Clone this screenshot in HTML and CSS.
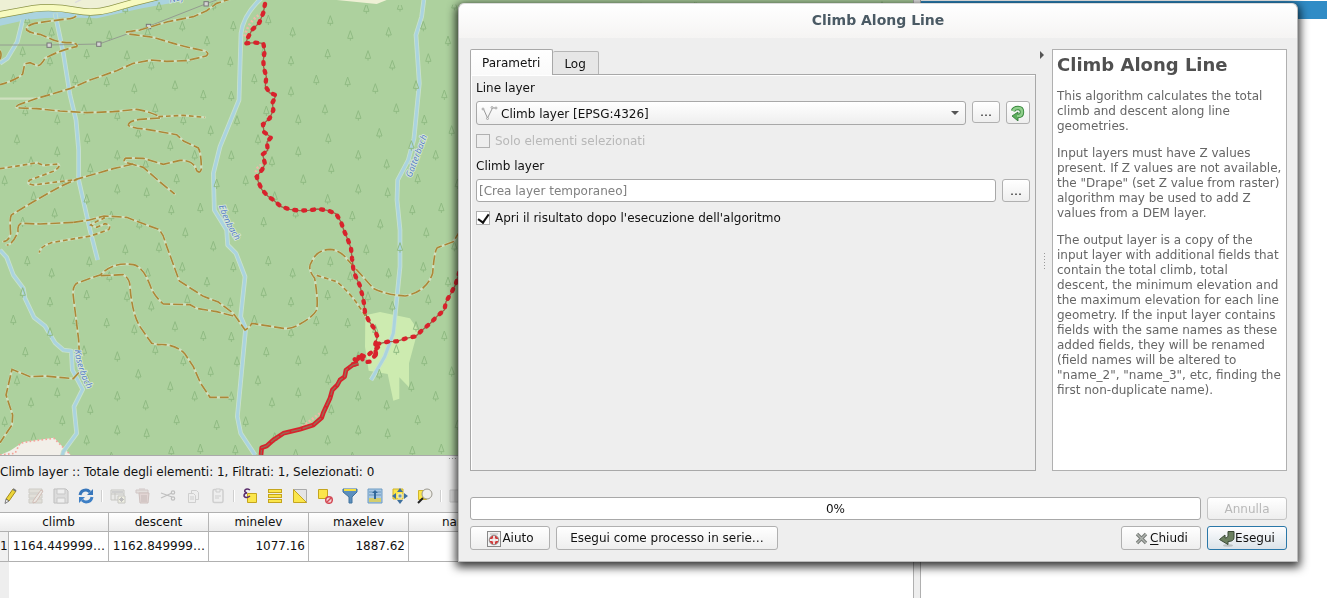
FILE: index.html
```html
<!DOCTYPE html>
<html lang="it">
<head>
<meta charset="utf-8">
<title>Climb Along Line</title>
<link rel="stylesheet" href="styles.css">
</head>
<body>
<main class="desktop">
<section class="left-pane">
<svg class="map" viewBox="0 0 2739 1365" preserveAspectRatio="xMinYMin slice" aria-label="Mappa">
<defs>
<path id="tree" d="M0-17L-8 6H8ZM0 6V13"/>
<pattern id="wood" width="723" height="723" patternUnits="userSpaceOnUse">
<g class="trees">
<use href="#tree" x="82" y="62"/><use href="#tree" x="68" y="157"/><use href="#tree" x="155" y="99"/><use href="#tree" x="268" y="64"/><use href="#tree" x="328" y="109"/><use href="#tree" x="260" y="164"/><use href="#tree" x="150" y="185"/><use href="#tree" x="40" y="239"/><use href="#tree" x="226" y="242"/><use href="#tree" x="320" y="248"/><use href="#tree" x="381" y="169"/><use href="#tree" x="454" y="198"/><use href="#tree" x="403" y="268"/><use href="#tree" x="525" y="259"/><use href="#tree" x="547" y="81"/><use href="#tree" x="477" y="22"/><use href="#tree" x="376" y="28"/><use href="#tree" x="443" y="99"/><use href="#tree" x="562" y="178"/><use href="#tree" x="621" y="125"/><use href="#tree" x="691" y="187"/><use href="#tree" x="700" y="80"/><use href="#tree" x="640" y="18"/><use href="#tree" x="610" y="287"/><use href="#tree" x="694" y="290"/><use href="#tree" x="150" y="277"/><use href="#tree" x="76" y="335"/><use href="#tree" x="252" y="331"/><use href="#tree" x="172" y="361"/><use href="#tree" x="352" y="349"/><use href="#tree" x="466" y="328"/><use href="#tree" x="550" y="362"/><use href="#tree" x="632" y="394"/><use href="#tree" x="711" y="364"/><use href="#tree" x="51" y="421"/><use href="#tree" x="262" y="418"/><use href="#tree" x="172" y="457"/><use href="#tree" x="415" y="402"/><use href="#tree" x="511" y="439"/><use href="#tree" x="584" y="468"/><use href="#tree" x="694" y="469"/><use href="#tree" x="93" y="487"/><use href="#tree" x="352" y="468"/><use href="#tree" x="271" y="508"/><use href="#tree" x="437" y="495"/><use href="#tree" x="530" y="539"/><use href="#tree" x="14" y="544"/><use href="#tree" x="187" y="541"/><use href="#tree" x="101" y="592"/><use href="#tree" x="352" y="570"/><use href="#tree" x="440" y="580"/><use href="#tree" x="650" y="554"/><use href="#tree" x="601" y="626"/><use href="#tree" x="514" y="632"/><use href="#tree" x="706" y="629"/><use href="#tree" x="260" y="600"/><use href="#tree" x="164" y="642"/><use href="#tree" x="334" y="650"/><use href="#tree" x="418" y="675"/><use href="#tree" x="68" y="668"/><use href="#tree" x="556" y="700"/>
</g>
</pattern>
<path id="p-eb" d="M656 618Q680 690 718 735"/>
<path id="p-ka" d="M224 1050Q232 1120 270 1180"/>
<path id="p-ga" d="M1234 534L1286 398"/>
<g id="tracks">
<path d="M228 48Q222 56 200 57L150 63L104 70Q76 78 80 90Q92 100 120 103L160 120Q180 128 215 128Q236 132 230 140Q180 150 135 175Q122 198 112 197L90 188L74 192L68 222Q50 240 0 254"/>
<path d="M0 152Q6 165 0 178"/>
<path d="M700-6L650 10L620 32L580 50L500 66L420 90L380 96Q378 102 400 104L460 112L520 130Q560 142 615 153Q630 160 618 168L560 182L500 184L455 180L400 190L350 212L270 240L210 266L105 297L56 314Q40 324 60 324L110 326L180 333L260 338L340 335L410 328Q440 332 475 348"/>
<path d="M480 354L420 358Q384 364 385 376Q396 384 440 388L530 404L552 424L595 444Q604 460 604 508Q600 522 590 512Q582 480 540 481L490 493L430 475L378 474Q364 484 384 489L430 502L480 546L524 582"/>
<path d="M400 492L340 506L232 537L180 560L100 605L34 645Q28 656 32 700Q28 722 10 725M220 667L120 672L64 670Q52 674 54 695Q38 735 20 735"/>
<path d="M220 667L268 660L312 648L380 652L440 675L475 688Q490 700 495 725L538 843L610 889L655 906L700 940L735 990Q752 980 755 970L850 985Q875 988 900 972Q940 950 950 930Q955 900 944 835Q920 805 935 785Q950 750 990 748Q1020 750 1040 776L1075 815L1120 865Q1160 885 1215 888Q1280 875 1298 820Q1304 740 1315 742L1360 725L1400 660"/>
<path d="M700 948L650 935L590 925L570 914L490 912Q460 885 452 860Q430 800 400 794Q340 784 302 824L232 849Q216 858 220 890L236 1020L240 1110"/>
<path d="M302 827L370 824Q390 836 390 860Q396 940 420 980L455 1030L475 1034Q525 1030 555 1062L580 1100L602 1150L630 1192L686 1192"/>
<path d="M238 1116L220 1136L135 1128L90 1130L36 1108L18 1185L38 1245L36 1275L0 1328"/>
</g>
<g id="lanes">
<path d="M0 506L90 492L110 488L130 496L174 492Q185 500 160 514L90 540Q76 552 100 555L232 538"/>
<path d="M312 648L312 655Q280 668 272 675L290 682L315 671Q336 676 326 689L272 708L200 720L154 728Q120 740 118 758"/>
<path d="M475 350L550 346L614 352"/>
<path d="M950 826L1010 845Q1060 885 1100 955"/>
</g>
</defs>
<rect class="forest" width="2739" height="1365"/>
<path class="field" d="M0 0H470Q330 38 265 36L170 34L0 52ZM1010 0H1160L1130 12Z"/>
<path class="meadow" d="M1096 946L1140 936L1230 955L1254 990L1227 1090V1162L1198 1132V1196L1180 1202L1163 1122L1106 1112L1095 1040Z"/>
<path class="rock" d="M0 1365L30 1352L70 1326L162 1313L212 1365Z"/>
<path class="rock-edge" d="M0 1365L45 1360L60 1330L90 1324L162 1315L212 1365"/>
<path class="river" d="M-5 66L75 48Q170 36 290 43L420 14L530-6"/>
<path class="lane-faint" d="M225 8L245-2"/>
<g class="stream-case">
<path d="M68 60L52 125L22 175L0 190M165 40L190 160L210 285L228 360L236 450V540L270 690L293 780"/>
<path d="M795-15Q730 40 723 100L717 300L660 440L640 520L643 630L680 690L683 735L708 760L735 830L722 950L737 985L712 1250L722 1300L765 1365"/>
<path d="M1272-5L1265 50L1248 105L1258 250L1242 415L1225 480L1193 540L1191 600L1200 690V800L1180 1000L1154 1070L1113 1140"/>
<path d="M0 750L20 772L40 825L70 865L75 895L102 952L135 978L165 1028L190 1050L214 1053L217 1110L248 1168L222 1220L230 1300L190 1355L186 1370"/>
</g>
<g class="stream">
<path d="M68 60L52 125L22 175L0 190M165 40L190 160L210 285L228 360L236 450V540L270 690L293 780"/>
<path d="M795-15Q730 40 723 100L717 300L660 440L640 520L643 630L680 690L683 735L708 760L735 830L722 950L737 985L712 1250L722 1300L765 1365"/>
<path d="M1272-5L1265 50L1248 105L1258 250L1242 415L1225 480L1193 540L1191 600L1200 690V800L1180 1000L1154 1070L1113 1140"/>
<path d="M0 750L20 772L40 825L70 865L75 895L102 952L135 978L165 1028L190 1050L214 1053L217 1110L248 1168L222 1220L230 1300L190 1355L186 1370"/>
</g>
<path fill="url(#wood)" d="M0 62L270 44L480 6L1150 16L2739 0V1302H210L165 1310L60 1324L0 1350Z"/>
<path fill="url(#wood)" d="M210 1300H2739V1365H240Z"/>
<path class="road-case" d="M-5 45L100 26Q160 18 230 32Q280 42 330 28L400 8L480-12"/>
<path class="road" d="M-5 45L100 26Q160 18 230 32Q280 42 330 28L400 8L480-12"/>
<path class="power" d="M0 135H147L297 132L446 79L619 11L650 0"/>
<g class="pylons"><rect x="141" y="129" width="13" height="13"/><rect x="290" y="126" width="13" height="13"/><rect x="439" y="73" width="13" height="13"/><rect x="612" y="5" width="13" height="13"/></g>
<use class="casing" href="#tracks"/><use class="casing" href="#lanes"/><path class="casing" d="M0 296H105"/>
<use class="track" href="#tracks"/><use class="lane" href="#lanes"/>
<path class="faint-red" d="M786 40Q745 60 732 115M785 495Q765 500 768 530M960 1240L900 1285"/>
<g class="trail-line">
<path d="M795 12L790 38L778 68L756 90L742 116L738 130L766 128L790 130L794 152L790 180L791 202L799 230L796 258L808 278L828 286L817 309L820 330L809 355L789 373L792 396L813 412L801 426L803 451L788 463L795 492L787 508L770 530L775 545L785 568L803 588L823 602L843 620L869 628L898 632L926 631L953 627L982 631L1008 641L1023 666L1032 692L1044 720L1053 745L1056 775L1060 806L1067 830L1079 855L1086 882L1092 910L1095 937L1106 962L1124 987L1132 1010L1126 1032L1127 1060L1118 1070"/>
<path d="M1132 1032L1165 1025L1190 1024L1218 1015L1247 1009L1268 989L1291 970L1312 948L1333 930L1338 905L1352 882L1366 855L1374 830L1384 795"/>
</g>
<g class="trail">
<path d="M795 12L790 38L778 68L756 90L742 116L738 130L766 128L790 130L794 152L790 180L791 202L799 230L796 258L808 278L828 286L817 309L820 330L809 355L789 373L792 396L813 412L801 426L803 451L788 463L795 492L787 508L770 530L775 545L785 568L803 588L823 602L843 620L869 628L898 632L926 631L953 627L982 631L1008 641L1023 666L1032 692L1044 720L1053 745L1056 775L1060 806L1067 830L1079 855L1086 882L1092 910L1095 937L1106 962L1124 987L1132 1010L1126 1032L1127 1060L1118 1070"/>
<path d="M1132 1032L1165 1025L1190 1024L1218 1015L1247 1009L1268 989L1291 970L1312 948L1333 930L1338 905L1352 882L1366 855L1374 830L1384 795"/>
<path d="M1126 1065L1110 1085L1092 1087L1080 1062L1068 1093L1046 1092"/>
<path d="M1128 1060L1126 1068M1108 1062L1136 1040M1064 1078L1070 1086M1086 1066L1094 1070"/>
</g>
<path class="route" d="M1075 1090L1058 1095L1038 1110L1034 1130L1020 1140L1012 1155L997 1170L990 1195L970 1238L965 1253L940 1275L900 1288L850 1300L820 1320L800 1338L785 1343L783 1365"/>
<path class="route-core" d="M1075 1090L1058 1095L1038 1110L1034 1130L1020 1140L1012 1155L997 1170L990 1195L970 1238L965 1253L940 1275L900 1288L850 1300L820 1320L800 1338L785 1343L783 1365"/>
<g class="names">
<text><textPath href="#p-eb">Ebenbach</textPath></text>
<text><textPath href="#p-ka">Kaserbach</textPath></text>
<text><textPath href="#p-ga">Gatterbach</textPath></text>
<text x="510" y="8" transform="rotate(-12 510 8)">Naf</text>
</g>
</svg>
<div class="grip" aria-hidden="true"></div>
<h2 class="table-title">Climb layer :: Totale degli elementi: 1, Filtrati: 1, Selezionati: 0</h2>
<div class="toolbar">
<button aria-label="Modifica"><svg viewBox="0 0 16 16"><path d="M3 11L10 1l3 2-7 10z" fill="#ecd53a" stroke="#a48b1b"/><path d="M10 1l3 2" stroke="#777" stroke-width="2"/><path d="M3 11l3 2-4 2.500z" fill="#eee" stroke="#555" stroke-width=".7"/></svg></button>
<button class="off" disabled aria-label="Modifica multipla"><svg viewBox="0 0 16 16"><path d="M1 1h13v4H1zM1 6h13v4H1zM1 11h13v4H1z" fill="#d2cfc0" stroke="#aaa69a"/><path d="M5 13L13 2l2 1-7 11-3 1z" fill="#e4dfd5" stroke="#a66d60" stroke-width=".8"/></svg></button>
<button class="off" disabled aria-label="Salva"><svg viewBox="0 0 16 16"><path d="M1 1h12l2 2v12H1z" fill="#c8c8c8" stroke="#888"/><path d="M4 1h8v5H4zM4 10h8v5H4z" fill="#eee" stroke="#999"/></svg></button>
<button aria-label="Ricarica"><svg viewBox="0 0 16 16" fill="none"><path d="M2 7Q3 2 8 2q2 0 4 2" stroke="#3776bb" stroke-width="3"/><path d="M15 1v6H9z" fill="#3776bb"/><path d="M14 9q-1 5-6 5-2 0-4-2" stroke="#3d7fc5" stroke-width="3"/><path d="M1 15V9h6z" fill="#3d7fc5"/></svg></button>
<i class="sep"></i>
<button class="off" disabled aria-label="Aggiungi elemento"><svg viewBox="0 0 16 16"><path d="M1 2h13v10H1zM1 6h13M5 3v9" fill="#e4e4df" stroke="#99998f"/><path d="M2 4h11" stroke="#aaa" stroke-width="2"/><path d="M8 8h7v7H8z" fill="#f0efd4" stroke="#99998f"/><path d="M11.500 9v5M9 11.500h5M10 10l3 3M13 10l-3 3" stroke="#888"/></svg></button>
<button class="off" disabled aria-label="Elimina"><svg viewBox="0 0 16 16"><path d="M1 2h12v3H1zM4 1h6" fill="#d9cdca" stroke="#b09a96"/><path d="M4 5h10l-1 10H5z" fill="#d4b9b5" stroke="#a88a86"/><path d="M7 7v7M9 7v7M11 7v7" stroke="#957a76"/></svg></button>
<button class="off" disabled aria-label="Taglia"><svg viewBox="0 0 16 16" fill="none" stroke="#888" stroke-width="1.200"><path d="M1 5l11 4M1 10l11-5"/><circle cx="13" cy="4.500" r="1.700"/><circle cx="13" cy="10.500" r="1.700"/></svg></button>
<button class="off" disabled aria-label="Copia"><svg viewBox="0 0 16 16" fill="#eee" stroke="#aaa"><path d="M6.500 2.500h5l2 2v7h-7z"/><path d="M3.500 5.500h5l2 2v7h-7zM5 9h4M5 11h4"/></svg></button>
<button class="off" disabled aria-label="Incolla"><svg viewBox="0 0 16 16" fill="#eee" stroke="#aaa"><rect x="3" y="1.500" width="10" height="13" rx="1.500" stroke-width="1.500"/><path d="M6 1h4v3H6zM5 8h6M5 10h4"/></svg></button>
<i class="sep"></i>
<button aria-label="Seleziona con espressione"><svg viewBox="0 0 16 16"><path d="M5.500 5.500h9v9h-9z" fill="#fbe64b" stroke="#c5a51e"/><path d="M8 2Q5 0 3 2q-1 2 2 3Q2 5 2 8q2 3 6 0" fill="none" stroke="#5b2e6c" stroke-width="1.500"/></svg></button>
<button aria-label="Seleziona tutto"><svg viewBox="0 0 16 16" fill="#fbe64b" stroke="#c5a51e"><rect x="1.500" y="1.500" width="13" height="3"/><rect x="1.500" y="6.500" width="13" height="3"/><rect x="1.500" y="11.500" width="13" height="3"/></svg></button>
<button aria-label="Inverti selezione"><svg viewBox="0 0 16 16"><path d="M1.500 1.500h13v13z" fill="#e5e5e5" stroke="#aaa"/><path d="M1.500 1.500v13h13z" fill="#fbe64b" stroke="#c5a51e"/></svg></button>
<button aria-label="Deseleziona"><svg viewBox="0 0 16 16"><path d="M1.500 1.500h9v9h-9z" fill="#fbe64b" stroke="#c5a51e"/><circle cx="12" cy="12" r="3.300" fill="#f3cfd2" stroke="#d34a55" stroke-width="1.500"/><path d="M10 14l4-4" stroke="#d34a55" stroke-width="1.400"/></svg></button>
<button aria-label="Filtra"><svg viewBox="0 0 16 16"><path d="M1 1h14v3l-5 5v6H7V9L1 4z" fill="#5c8fbd" stroke="#41729e"/><path d="M2 2h12" stroke="#f5df40" stroke-width="2"/></svg></button>
<button aria-label="Sposta in alto"><svg viewBox="0 0 16 16"><path d="M1 1h14v14H1z" fill="#a9c8e4" stroke="#6f9cc3"/><path d="M2 4h12M2 7h12" stroke="#6795bb"/><path d="M2 11h12M2 13h12" stroke="#e2cf45" stroke-width="1.500"/><path d="M8 2l3 3H9v6H7V5H5z" fill="#31689a"/></svg></button>
<button aria-label="Sposta mappa"><svg viewBox="0 0 16 16"><path d="M1 1h10v10H1z" fill="#fbe64b" stroke="#d0b52a"/><path d="M8 0l3 4H5zM8 16l3-4H5zM0 8l4-3v6zM16 8l-4-3v6z" fill="#3f709e"/><path d="M6 6h4v4H6z" fill="#6a92b8" stroke="#fff9c0"/></svg></button>
<button aria-label="Zoom"><svg viewBox="0 0 16 16"><path d="M1.500 2.500h8v9h-8z" fill="#fbe64b" stroke="#d0b52a"/><path d="M6 10l-5 5" stroke="#222" stroke-width="2"/><circle cx="10" cy="6" r="5" fill="#efeee9" stroke="#99968c"/></svg></button>
<i class="sep"></i>
<button class="off" disabled aria-label="Nuovo campo"><svg viewBox="0 0 16 16" fill="#ccc" stroke="#999"><path d="M1 2h14v12H1zM6 2v12M10 2v12"/></svg></button>
</div>
<div class="grid-wrap">
<table class="attrs">
<thead><tr><th class="corner"></th><th>climb</th><th>descent</th><th>minelev</th><th>maxelev</th><th>name</th></tr></thead>
<tbody><tr><th class="rownum">1</th><td>1164.449999…</td><td>1162.849999…</td><td>1077.16</td><td>1887.62</td><td></td></tr></tbody>
</table>
<div class="gutter"></div>
</div>
</section>
<div class="splitter"></div>
<aside class="right-pane"><div class="selected-bar"></div></aside>
</main>

<section class="dialog" role="dialog" aria-labelledby="dlg-title">
<header class="titlebar" id="dlg-title">Climb Along Line</header>
<div class="dialog-body">
<div class="columns">
<div class="tabs">
<div class="tablist" role="tablist"><button class="tab active" role="tab" aria-selected="true">Parametri</button><button class="tab" role="tab" aria-selected="false">Log</button></div>
<form class="panel">
<label for="line">Line layer</label>
<div class="field-row">
<div class="combo">
<svg class="line-icon" viewBox="0 0 16 14" fill="none" stroke="#999"><path d="M2 3l4 9 5-10h3"/><g fill="#eee" stroke-width=".8"><circle cx="1.500" cy="3" r="1"/><circle cx="6" cy="12.500" r="1"/><circle cx="10.500" cy="1.500" r="1"/><circle cx="14.500" cy="2" r="1"/></g></svg>
<select id="line"><option>Climb layer [EPSG:4326]</option></select>
<span class="caret"></span>
</div>
<button type="button" class="btn dots" aria-label="Sfoglia layer">…</button>
<button type="button" class="btn iterate" aria-label="Itera"><svg viewBox="0 0 16 16"><path d="M3 6Q4 3 8 3q4 0 4 4 0 4-4 4H7" fill="none" stroke="#3a8a3f" stroke-width="4.400"/><path d="M8 7v9l-6-5z" fill="#5cae5c" stroke="#2f7434" stroke-width=".8"/><path d="M3 6Q4 3 8 3q4 0 4 4 0 4-4 4H7" fill="none" stroke="#8fce8b" stroke-width="2.600"/></svg></button>
</div>
<label class="check disabled"><input type="checkbox" disabled>Solo elementi selezionati</label>
<label for="out">Climb layer</label>
<div class="field-row">
<input type="text" id="out" class="text" placeholder="[Crea layer temporaneo]">
<button type="button" class="btn dots low" aria-label="Sfoglia output">…</button>
</div>
<label class="check"><input type="checkbox" checked>Apri il risultato dopo l'esecuzione dell'algoritmo</label>
</form>
</div>
<div class="divider"><span class="arrow"></span><span class="vdots"></span></div>
<article class="help">
<h1>Climb Along Line</h1>
<p>This algorithm calculates the total climb and descent along line geometries.</p>
<p>Input layers must have Z values present. If Z values are not available, the "Drape" (set Z value from raster) algorithm may be used to add Z values from a DEM layer.</p>
<p>The output layer is a copy of the input layer with additional fields that contain the total climb, total descent, the minimum elevation and the maximum elevation for each line geometry. If the input layer contains fields with the same names as these added fields, they will be renamed (field names will be altered to "name_2", "name_3", etc, finding the first non-duplicate name).</p>
</article>
</div>
<footer class="actions">
<div class="action-row"><div class="progress" role="progressbar" aria-valuenow="0">0%</div><button class="btn wide" disabled>Annulla</button></div>
<div class="action-row">
<button class="btn wide"><svg viewBox="0 0 16 16"><rect x="1.500" y=".5" width="13" height="15" fill="#f3f3f3" stroke="#888"/><path d="M4 3h8" stroke="#bbb"/><circle cx="8" cy="9" r="3.300" fill="none" stroke="#d23a3a" stroke-width="2.400"/><path d="M4 9h2M10 9h2M8 5v2M8 11v2" stroke="#eee" stroke-width="1.800"/><circle cx="8" cy="9" r="4.800" fill="none" stroke="#777" stroke-width=".7"/></svg>Aiuto</button>
<button class="btn batch">Esegui come processo in serie…</button>
<span class="spacer"></span>
<button class="btn wide"><svg class="close-icon" viewBox="0 0 16 16"><path d="M3 3l9 9M12 3l-9 9" stroke="#777b77" stroke-width="3.400"/><path d="M3 3l9 9M12 3l-9 9" stroke="#b0b5b0" stroke-width="1.400"/></svg><span><u>C</u>hiudi</span></button>
<button class="btn wide primary"><svg viewBox="0 0 16 16"><ellipse cx="9" cy="14.500" rx="5" ry="1.200" fill="#bbc1c3"/><path d="M9 .5h6v6q0 4-6 4v3L.5 8.500 6 4v3q3 0 3-2z" fill="#6b8060" stroke="#3b4a37"/></svg>Esegui</button>
</div>
</footer>
</div>
</section>
</body>
</html>
```
FILE: styles.css
```css
* { box-sizing: border-box; }
body { margin: 0; font: 12px/15px "DejaVu Sans", sans-serif; color: #111; background: #fff; overflow: hidden; }
button, input, select { font: inherit; color: inherit; margin: 0; }
h1, h2, p { margin: 0; }

.desktop { display: flex; height: 100vh; }
.left-pane { flex: 1; min-width: 0; display: flex; flex-direction: column; background: #eee; }
.splitter { width: 8px; background: #eee; border: solid #b0b0b0; border-width: 0 1px; }
.right-pane { flex: 0 0 406px; background: #fff; padding-top: 1px; }
.selected-bar { height: 18px; background: #308cc6; }

.map { display: block; width: 100%; height: 455px; flex: none; }
.forest { fill: #add19e; }
.trees { fill: none; stroke: #8fba82; stroke-width: 3; }
.map > path { fill: none; }
.map > path.field { fill: #eef0d5; }
.map > path.meadow { fill: #cdebb0; }
.map > path.rock { fill: #f2efe9; }
.map > path[fill] { fill: url(#wood); }
.rock-edge { stroke: #f4a49a; stroke-width: 5; stroke-dasharray: 5 7; }
.river { stroke: #aad3df; stroke-width: 24; }
.lane-faint { stroke: #ddd; stroke-width: 4; }
.stream-case { fill: none; stroke: #c9e2cd; stroke-width: 14; stroke-linejoin: round; }
.stream { fill: none; stroke: #aad3df; stroke-width: 9; stroke-linejoin: round; }
.road-case { stroke: #8c9548; stroke-width: 22; }
.road { stroke: #f7fabf; stroke-width: 18; }
.power { stroke: #949c90; stroke-width: 3; }
.pylons { fill: #d5d5d5; stroke: #777; stroke-width: 3; }
.casing { fill: none; stroke: #cfe0bf; stroke-width: 7; stroke-linejoin: round; stroke-linecap: round; }
.track { fill: none; stroke: #ac8838; stroke-width: 5; stroke-dasharray: 30 9; }
.lane { fill: none; stroke: #ac8838; stroke-width: 5; stroke-dasharray: 14 9; }
.faint-red { stroke: #eebaa9; stroke-width: 8; stroke-dasharray: 6 6; }
.trail-line { fill: none; stroke: #96684a; stroke-width: 4; }
.trail { fill: none; stroke: #d8232c; stroke-width: 13; stroke-linecap: round; stroke-dasharray: 6 21; }
.route { stroke: #d8232c; stroke-width: 14; stroke-linejoin: round; }
.route-core { stroke: #9a6b55; stroke-width: 4; stroke-dasharray: 30 5; }
.names { font: italic 27px "Noto Sans", sans-serif; fill: #5b83c4; stroke: #d8e8dc; stroke-width: 5; paint-order: stroke; }

.grip { height: 7px; flex: none; border-top: 1px solid #aaa; }
.grip::after { content: ""; display: block; width: 16px; height: 1px; margin: 2px auto; background: repeating-linear-gradient(90deg, #999 0 1px, transparent 1px 3px); }
.table-title { font-size: 12px; font-weight: 400; line-height: 21px; height: 22px; flex: none; white-space: nowrap; }
.toolbar { display: flex; align-items: center; height: 28px; flex: none; margin-left: -2px; padding-bottom: 4px; }
.toolbar button { width: 25px; height: 20px; padding: 0; border: 0; background: none; display: grid; place-items: center; flex: none; }
.toolbar svg { width: 16px; height: 16px; }
.toolbar .off { opacity: .45; }
.sep { width: 7px; height: 12px; flex: none; background: linear-gradient(90deg, transparent 3px, #cfcfcf 3px 4px, #fff 4px 5px, transparent 5px); }
.grid-wrap { flex: 1; background: #fff; border-top: 1px solid #b0b0b0; display: flex; flex-direction: column; }
.attrs { border-collapse: separate; border-spacing: 0; table-layout: fixed; width: 100%; line-height: 15px; }
.attrs th, .attrs td { border-right: 1px solid #b5b5b5; border-bottom: 1px solid #b0b0b0; padding: 0; font-weight: 400; white-space: nowrap; }
.attrs thead th { height: 19px; padding-top: 1px; background: linear-gradient(#fff, #ececec); width: 100px; }
.attrs thead th:last-child { width: auto; text-align: left; padding-left: 33px; }
.attrs thead .corner { width: 9px; border-right: 0; }
.attrs tbody th { background: #f0f0f0; overflow: hidden; text-align: left; }
.attrs td { height: 30px; text-align: right; padding-right: 3px; }
.gutter { flex: 1; width: 9px; background: #eee; }

.dialog { position: fixed; left: 458px; right: 29px; top: 3px; bottom: 36px; display: flex; flex-direction: column; background: #eee; border: 1px solid #bbb; border-top-color: #ddd; border-radius: 6px 6px 0 0; box-shadow: 0 3px 10px 2px rgba(0, 0, 0, .8); }
.titlebar { height: 34px; line-height: 32px; flex: none; text-align: center; font-size: 14px; font-weight: 700; color: #4a5a64; background: linear-gradient(#fff, #f5f4f3); border-radius: 6px 6px 0 0; }
.dialog-body { flex: 1; display: flex; flex-direction: column; gap: 26px; padding: 11px 10px 11px 11px; }
.columns { flex: 1; display: flex; }
.tabs { flex: 1; display: flex; flex-direction: column; }
.tablist { display: flex; align-items: flex-end; height: 26px; margin-bottom: -1px; }
.tab { height: 24px; padding: 2px 12px 0 11px; border: 1px solid #b5b5b5; background: #e6e6e6; border-radius: 2px 2px 0 0; border-left: 0; }
.tab.active { height: 26px; background: linear-gradient(#fff, #fafafa); border: 1px solid #a8a8a8; border-bottom: 0; padding: 1px 12px 0 11px; z-index: 1; }
.panel { flex: 1; display: flex; flex-direction: column; gap: 6px; padding: 4px 5px; border: 1px solid #a8a8a8; box-shadow: inset 1px 1px #fff; }
.panel label { height: 16px; line-height: 18px; }
.field-row { display: flex; gap: 6px; align-items: flex-start; }
.combo { position: relative; flex: 1; }
.combo select { appearance: none; display: block; width: 100%; height: 24px; padding: 2px 24px 0; border: 1px solid #a8a8a8; border-radius: 3px; background: linear-gradient(#fff, #eee); }
.line-icon { position: absolute; left: 5px; top: 5px; width: 17px; height: 14px; }
.caret { position: absolute; right: 7px; top: 10px; border: 4px solid transparent; border-top-color: #555; border-bottom: 0; }
.btn { display: inline-flex; align-items: center; justify-content: center; height: 24px; padding: 1px 0 0; border: 1px solid #b0b0b0; border-radius: 3px; background: linear-gradient(#fff, #eee); }
.btn:disabled { color: #b8b8b8; border-color: #c4c4c4; }
.btn svg { width: 16px; height: 16px; }
.dots { width: 28px; height: 22px; }
.dots.low, .text { height: 23px; }
.iterate { width: 24px; height: 23px; padding: 0; }
.text { flex: 1; min-width: 0; padding: 0 2px; border: 1px solid #a8a8a8; border-radius: 3px; background: #fff; }
.text::placeholder { color: #808080; opacity: 1; }
.panel .check { display: flex; align-items: center; gap: 5px; height: 20px; }
.check.disabled { color: #b8b8b8; }
.check input { appearance: none; width: 14px; height: 14px; border: 1px solid #b0b0b0; background: #fff; display: grid; place-items: center; }
.check input:disabled { background: #eee; }
.check input:checked::after { content: ""; width: 5px; height: 9px; margin-bottom: 2px; border: solid #111; border-width: 0 2px 2px 0; transform: rotate(35deg); }
.divider { width: 16px; display: flex; flex-direction: column; align-items: center; justify-content: space-between; padding: 2px 0 201px; }
.arrow { border: 4px solid transparent; border-left-color: #555; border-right: 0; margin-right: 4px; }
.vdots { width: 1px; height: 17px; background: repeating-linear-gradient(#999 0 1px, transparent 1px 3px); }
.help { flex: 0 0 235px; padding: 4px; background: #fff; border: 1px solid #b0b0b0; color: #666; }
.help h1 { font-size: 18px; line-height: 21px; font-weight: 700; color: #505050; margin-bottom: 14px; }
.help p { margin-bottom: 12px; }
.actions { display: flex; flex-direction: column; gap: 6px; }
.action-row { display: flex; gap: 6px; }
.progress { flex: 1; height: 23px; line-height: 23px; text-align: center; background: #fff; border: 1px solid #a8a8a8; border-radius: 3px; }
.wide { width: 80px; }
.action-row .wide:disabled { height: 23px; }
.batch { width: 222px; }
.spacer { flex: 1; }
.primary { border-color: #2a77a8; background: linear-gradient(#fdfdfe, #dbe3e9); }
u { text-underline-offset: 2px; }
```
